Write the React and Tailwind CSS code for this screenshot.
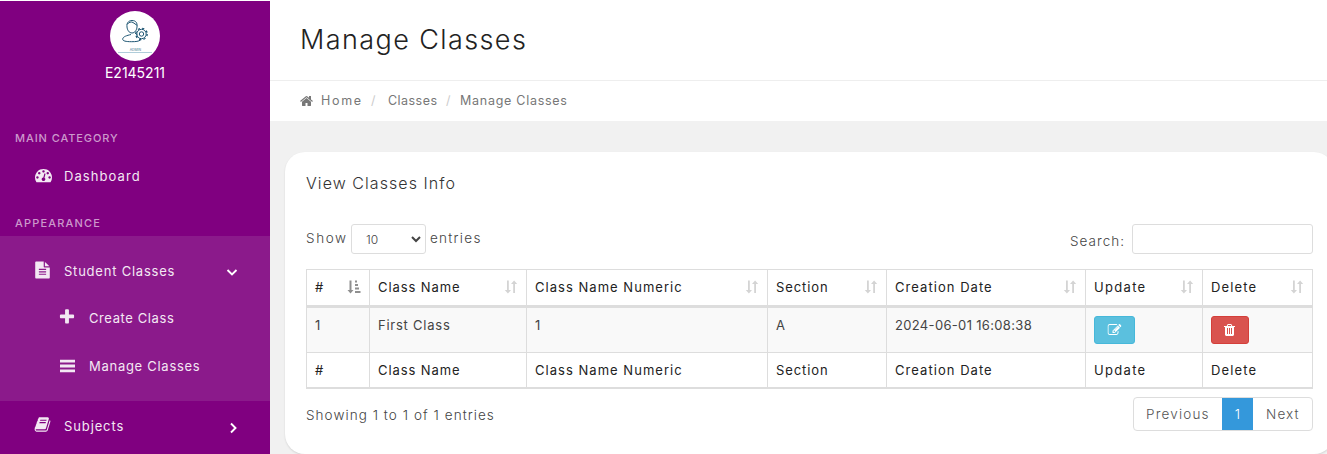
import React from "react";

const PATHS = {
  home: "M1408 992v480q0 26-19 45t-45 19h-384v-384h-256v384h-384q-26 0-45-19t-19-45v-480q0-1 .5-3t.5-3l575-474 575 474q1 2 1 6zm223-69l-62 74q-8 9-21 11h-3q-13 0-21-7l-692-577-692 577q-12 8-24 7-13-2-21-11l-62-74q-8-10-7-23.5t11-21.5l719-599q32-26 76-26t76 26l244 204v-195q0-14 9-23t23-9h192q14 0 23 9t9 23v408l219 182q10 8 11 21.5t-7 23.5z",
  dashboard: "M384 1152q0-53-37.5-90.5t-90.5-37.5-90.5 37.5-37.5 90.5 37.5 90.5 90.5 37.5 90.5-37.5 37.5-90.5zm192-448q0-53-37.5-90.5t-90.5-37.5-90.5 37.5-37.5 90.5 37.5 90.5 90.5 37.5 90.5-37.5 37.5-90.5zm428 481l101-382q6-26-7.5-48.5t-38.5-29.5-48 6.5-30 39.5l-101 382q-60 5-107 43.5t-63 98.5q-20 77 20 146t117 89 146-20 89-117q16-60-6-117t-72-91zm660-33q0-53-37.5-90.5t-90.5-37.5-90.5 37.5-37.5 90.5 37.5 90.5 90.5 37.5 90.5-37.5 37.5-90.5zm-640-640q0-53-37.5-90.5t-90.5-37.5-90.5 37.5-37.5 90.5 37.5 90.5 90.5 37.5 90.5-37.5 37.5-90.5zm448 192q0-53-37.5-90.5t-90.5-37.5-90.5 37.5-37.5 90.5 37.5 90.5 90.5 37.5 90.5-37.5 37.5-90.5zm320 448q0 261-141 483-19 29-54 29h-1402q-35 0-54-29-141-221-141-483 0-182 71-348t191-286 286-191 348-71 348 71 286 191 191 286 71 348z",
  file: "M1596 476q14 14 28 36h-472v-472q22 14 36 28zm-476 164h544v1056q0 40-28 68t-68 28h-1344q-40 0-68-28t-28-68v-1600q0-40 28-68t68-28h800v544q0 40 28 68t68 28zm160 736v-64q0-14-9-23t-23-9h-704q-14 0-23 9t-9 23v64q0 14 9 23t23 9h704q14 0 23-9t9-23zm0-256v-64q0-14-9-23t-23-9h-704q-14 0-23 9t-9 23v64q0 14 9 23t23 9h704q14 0 23-9t9-23zm0-256v-64q0-14-9-23t-23-9h-704q-14 0-23 9t-9 23v64q0 14 9 23t23 9h704q14 0 23-9t9-23z",
  plus: "M1600 736v192q0 40-28 68t-68 28h-416v416q0 40-28 68t-68 28h-192q-40 0-68-28t-28-68v-416h-416q-40 0-68-28t-28-68v-192q0-40 28-68t68-28h416v-416q0-40 28-68t68-28h192q40 0 68 28t28 68v416h416q40 0 68 28t28 68z",
  book: "M1703 478q40 57 18 129l-275 906q-19 64-76.5 107.5t-122.5 43.5h-923q-77 0-148.5-53.5t-99.5-131.5q-24-67-2-127 0-4 3-27t4-37q1-8-3-21.5t-3-19.5q2-11 8-21t16.5-23.5 16.5-23.5q23-38 45-91.5t30-91.5q3-10 .5-30t-.5-28q3-11 17-28t17-23q21-36 42-92t25-90q1-9-2.5-32t.5-28q4-13 22-30.5t22-22.5q19-26 42.5-84.5t27.5-96.5q1-8-3-25.5t-2-26.5q2-8 9-18t18-23 17-21q8-12 16.5-30.5t15-35 16-36 19.5-32 26.5-23.5 36-11.5 47.5 5.5l-1 3q38-9 51-9h761q74 0 114 56t18 130l-274 906q-36 119-71.5 153.5t-128.5 34.5h-869q-27 0-38 15-11 16-1 43 24 70 144 70h923q29 0 56-15.5t35-41.5l300-987q7-22 5-57 38 15 59 43zm-1064 2q-4 13 2 22.5t20 9.5h608q13 0 25.5-9.5t16.5-22.5l21-64q4-13-2-22.5t-20-9.5h-608q-13 0-25.5 9.5t-16.5 22.5zm-83 256q-4 13 2 22.5t20 9.5h608q13 0 25.5-9.5t16.5-22.5l21-64q4-13-2-22.5t-20-9.5h-608q-13 0-25.5 9.5t-16.5 22.5z",
  edit: "M888 1184l116-116-152-152-116 116v56h96v96h56zm440-720q-16-16-33 1l-350 350q-17 17-1 33t33-1l350-350q17-17 1-33zm80 594v190q0 119-84.5 203.5t-203.5 84.5h-832q-119 0-203.5-84.5t-84.5-203.5v-832q0-119 84.5-203.5t203.5-84.5h832q63 0 117 25 15 7 18 23 3 17-9 29l-49 49q-14 14-32 8-23-6-45-6h-832q-66 0-113 47t-47 113v832q0 66 47 113t113 47h832q66 0 113-47t47-113v-126q0-13 9-22l64-64q15-15 35-7t20 29zm-96-738l288 288-672 672h-288v-288zm444 132l-92 92-288-288 92-92q28-28 68-28t68 28l152 152q28 28 28 68t-28 68z",
  trash: "M704 1376v-704q0-14-9-23t-23-9h-64q-14 0-23 9t-9 23v704q0 14 9 23t23 9h64q14 0 23-9t9-23zm256 0v-704q0-14-9-23t-23-9h-64q-14 0-23 9t-9 23v704q0 14 9 23t23 9h64q14 0 23-9t9-23zm256 0v-704q0-14-9-23t-23-9h-64q-14 0-23 9t-9 23v704q0 14 9 23t23 9h64q14 0 23-9t9-23zm-544-992h448l-48-117q-7-9-17-11h-317q-10 2-17 11zm928 32v64q0 14-9 23t-23 9h-96v948q0 83-47 143.5t-113 60.5h-832q-66 0-113-58.5t-47-141.5v-952h-96q-14 0-23-9t-9-23v-64q0-14 9-23t23-9h309l70-167q15-37 54-63t79-26h320q40 0 79 26t54 63l70 167h309q14 0 23 9t9 23z",
};

function Icon({ name, box = "0 0 1792 1792", className }) {
  return (
    <svg viewBox={box} fill="currentColor" className={className}>
      <path d={PATHS[name]} />
    </svg>
  );
}

function Chevron({ d, className }) {
  return (
    <svg viewBox="0 0 12 12" fill="none" stroke="#fff" strokeWidth="1.900" className={className}>
      <path d={d} />
    </svg>
  );
}

function Avatar() {
  return (
    <svg viewBox="0 0 50 50" fill="none" stroke="#1f5673" strokeWidth="1" className="size-[50px] rounded-full bg-white">
      <path d="M17 16c-.5-4 1.500-6.500 5-6.500 4 0 5.500 2.500 5 6.500-.3 3-2 6-5 6s-4.700-3-5-6z" />
      <path d="M17 13.500c2-2.500 4-3 6-2l4.300 3" />
      <path d="M21 23.500c-4 1-8 2-8.300 4.500-.2 2 3 2.700 9 2.700 4 0 7-.3 8.800-1.700M25 22l2.500 2" />
      <circle cx="31.500" cy="23" r="4.700" />
      <circle cx="31.500" cy="23" r="5.700" strokeWidth="1.300" strokeDasharray="2.200 2.280" />
      <circle cx="31.500" cy="23" r="2.200" />
      <path d="M8 41.500h34" stroke="#9cc0d0" strokeWidth="0.8" />
      <text x="25.300" y="40" textAnchor="middle" fontSize="3.400" fontFamily="Inter, sans-serif" fill="#4a7890" stroke="none">ADMIN</text>
    </svg>
  );
}

function SortIcon({ active }) {
  return active ? (
    <svg viewBox="0 0 14 14" fill="#8f8f8f" className="size-[14px]">
      <path d="M2.500 0.500h2v9.500h2L3.500 13.500 0.500 10h2zM8 0.500h2v2H8zM8 4h3v2H8zM8 7.500h4v2H8zM8 11h5.500v2H8z" />
    </svg>
  ) : (
    <svg viewBox="0 0 14 14" fill="#d4d4d4" className="size-[14px]">
      <path d="M3 0.500h1.800v9.500h2.200L3.900 13.500 0.800 10H3zM9.200 13V4H7L10.100 0.500 13.200 4H11v9z" />
    </svg>
  );
}

const COLUMNS = [
  { label: "#", tracking: "" },
  { label: "Class Name", tracking: "tracking-[0.920px]" },
  { label: "Class Name Numeric", tracking: "tracking-[1.030px]" },
  { label: "Section", tracking: "tracking-[0.900px]" },
  { label: "Creation Date", tracking: "tracking-[1.050px]" },
  { label: "Update", tracking: "tracking-[1.320px]" },
  { label: "Delete", tracking: "tracking-[1.150px]" },
];

const ROW = [
  { text: "1" },
  { text: "First Class", tracking: "tracking-[0.760px]" },
  { text: "1" },
  { text: "A" },
  { text: "2024-06-01 16:08:38", tracking: "tracking-[0.330px]" },
];

const GRID = "grid grid-cols-[63px_157px_241px_119px_199px_117px_110px]";
const CELL = "flex border-r border-[#ddd] pl-2 pr-2";

function Sidebar() {
  return (
    <aside className="flex h-[454px] w-[270px] shrink-0 flex-col border-t border-white bg-[#800080] text-[13px] text-[#f3e8f3]">
      <div className="flex h-[85px] flex-col items-center pt-[10px]">
        <Avatar />
        <div className="text-[14px] leading-6 text-white">E2145211</div>
      </div>
      <div className="mt-[42px] h-5 pl-[15px] text-[11px] font-medium leading-5 tracking-[0.920px] text-[#cc99cc]">MAIN CATEGORY</div>
      <div className="flex h-14 items-center pl-[35px]">
        <Icon name="dashboard" className="size-[17px] -translate-y-[1.500px]" />
        <span className="ml-3 translate-y-px tracking-[1.080px]">Dashboard</span>
      </div>
      <div className="mt-[9px] h-5 pl-[15px] text-[11px] font-medium leading-5 tracking-[1.170px] text-[#cc99cc]">APPEARANCE</div>
      <div className="mt-[3px] h-[165px] bg-[#8b1a8b] pt-[11px]">
        <div className="flex h-12 items-center pl-[34px]">
          <Icon name="file" className="h-[18px] w-[17px] -translate-y-px" />
          <span className="ml-[13px] w-[162px] translate-y-px tracking-[0.780px]">Student Classes</span>
          <Chevron d="M1.500 4l4.500 4.500L10.500 4" className="size-3 translate-y-px" />
        </div>
        <div className="flex h-12 items-center pl-[59px]">
          <Icon name="plus" className="size-[18px] -translate-x-px -translate-y-[2px]" />
          <span className="ml-3 tracking-[0.600px]">Create Class</span>
        </div>
        <div className="flex h-12 items-center pl-[60px]">
          <svg viewBox="0 0 15 13" fill="currentColor" className="h-[13px] w-[15px] -translate-y-[1.500px]">
            <path d="M0 0h15v3H0zM0 5h15v3H0zM0 10h15v3H0z" />
          </svg>
          <span className="ml-[14px] tracking-[0.720px]">Manage Classes</span>
        </div>
      </div>
      <div className="flex h-[50px] items-center pl-[34px]">
        <Icon name="book" className="size-[17px] -translate-y-[2px]" />
        <span className="ml-[13px] w-[163px] translate-y-px tracking-[0.880px]">Subjects</span>
        <Chevron d="M4 1.500l4.500 4.500L4 10.500" className="size-3 translate-y-[2px]" />
      </div>
    </aside>
  );
}

function DataTable() {
  return (
    <div className="w-[1007px] border-l border-t border-[#ddd] text-[13px] text-[#222]">
      <div className={`${GRID} h-[35px] leading-[35px]`}>
        {COLUMNS.map((c, i) => (
          <div key={c.label} className={`${CELL} items-center justify-between`}>
            <span className={c.tracking}>{c.label}</span>
            <SortIcon active={i === 0} />
          </div>
        ))}
      </div>
      <div className={`${GRID} h-12 border-b border-t-[3px] border-[#ddd] bg-[#f9f9f9] text-[#444]`}>
        {ROW.map((c, i) => (
          <div key={i} className={`${CELL} pt-[7px] leading-5`}>
            <span className={c.tracking}>{c.text}</span>
          </div>
        ))}
        <div className={`${CELL} pt-2`}>
          <button className="flex h-7 w-[41px] items-center justify-center rounded-[3px] border border-[#46b8da] bg-[#5bc0de] text-white">
            <Icon name="edit" className="size-[14px] -translate-x-[0.500px]" />
          </button>
        </div>
        <div className={`${CELL} pt-2`}>
          <button className="flex h-7 w-[38px] items-center justify-center rounded-[3px] border border-[#d43f3a] bg-[#d9534f] text-white">
            <Icon name="trash" className="size-[14px] -translate-x-[0.500px]" />
          </button>
        </div>
      </div>
      <div className={`${GRID} h-9 border-b-2 border-[#ddd] leading-[35px]`}>
        {COLUMNS.map((c) => (
          <div key={c.label} className={CELL}>
            <span className={c.tracking}>{c.label}</span>
          </div>
        ))}
      </div>
    </div>
  );
}

export default function App() {
  return (
    <div className="flex h-[454px] w-[1327px] overflow-hidden bg-[#f1f1f1] font-['Inter',sans-serif]">
      <Sidebar />
      <main className="flex w-[1057px] shrink-0 flex-col">
        <header className="h-[81px] border-b border-[#eee] bg-white pl-[30px]">
          <h1 className="text-[27px] font-light leading-[79px] tracking-[1.400px] text-[#222]">Manage Classes</h1>
        </header>
        <nav className="flex h-10 items-center bg-white pl-[30px] text-[12.500px] text-[#777]">
          <Icon name="home" box="0 0 1664 1792" className="h-[14px] w-[13px]" />
          <span className="ml-2 w-[50px] translate-y-px tracking-[1.700px]">Home</span>
          <span className="w-[17px] translate-y-px text-[#ccc]">/</span>
          <span className="w-[58px] translate-y-px tracking-[0.460px]">Classes</span>
          <span className="w-[14px] translate-y-px text-[#ccc]">/</span>
          <span className="translate-y-px tracking-[0.730px]">Manage Classes</span>
        </nav>
        <section className="ml-[15px] mt-[31px] h-[303px] w-[1049px] rounded-[20px] bg-white pl-[21px] shadow-[0_1px_2px_rgba(0,0,0,0.12)]">
          <h2 className="pt-[19px] text-[16px] font-light leading-6 tracking-[1.060px] text-[#333]">View Classes Info</h2>
          <div className="mt-[29px] flex h-[45px] w-[1007px] items-start justify-between text-[13.500px] font-light text-[#444]">
            <div className="flex items-center">
              <span className="w-[45px] -translate-y-px tracking-[1.600px]">Show</span>
              <div className="flex h-[30px] w-[75px] items-center justify-between rounded-[3px] border border-[#ddd] pl-[14px] pr-[4px] text-[12px]">
                <span className="translate-y-px">10</span>
                <svg viewBox="0 0 10 8" fill="none" stroke="#444" strokeWidth="2" className="h-2 w-[10px]">
                  <path d="M1 2l4 4 4-4" />
                </svg>
              </div>
              <span className="ml-1 -translate-y-px tracking-[1.270px]">entries</span>
            </div>
            <div className="flex items-center">
              <span className="w-[62px] translate-y-[2px] tracking-[1.050px]">Search:</span>
              <div className="h-[30px] w-[181px] rounded-[3px] border border-[#ddd]" />
            </div>
          </div>
          <DataTable />
          <div className="flex w-[1007px] justify-between pt-[7px] text-[13.500px] font-light text-[#444]">
            <span className="pt-[9px] leading-5 tracking-[1.050px]">Showing 1 to 1 of 1 entries</span>
            <div className="mt-px flex h-[34px] w-[180px] overflow-hidden rounded-[4px] border border-[#ddd] leading-8 text-[#555]">
              <span className="w-[88px] pl-3 tracking-[1.180px]">Previous</span>
              <span className="-my-px w-[31px] bg-[#3498db] text-center leading-[34px] text-white">1</span>
              <span className="pl-[13px] tracking-[1.150px]">Next</span>
            </div>
          </div>
        </section>
      </main>
    </div>
  );
}
